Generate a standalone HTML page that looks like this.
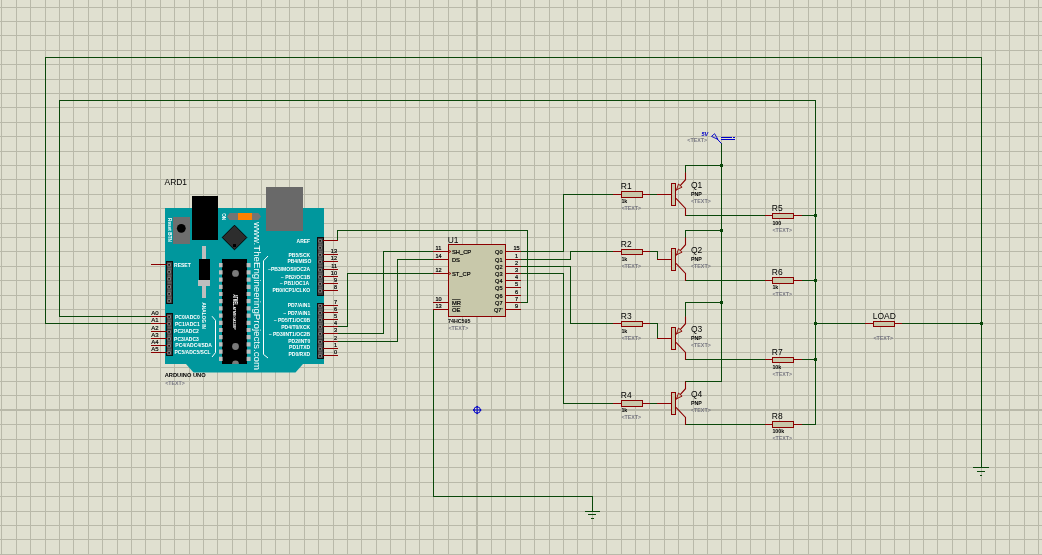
<!DOCTYPE html>
<html lang="en"><head><meta charset="utf-8"><title>Proteus schematic - Arduino UNO, 74HC595, PNP load switch</title>
<style>
html,body{margin:0;padding:0;background:#E0E0D0;}
body{width:1042px;height:555px;overflow:hidden;}
svg{display:block;will-change:transform;font-family:"Liberation Sans",Arial,sans-serif;}
.g{stroke:#B9B9A9;stroke-width:1;fill:none;shape-rendering:crispEdges;}
.g2{stroke:#B9B9A9;stroke-width:2;fill:none;shape-rendering:crispEdges;}
.w{stroke:#0A470A;stroke-width:1;fill:none;shape-rendering:crispEdges;stroke-linecap:square;}
.r{stroke:#8B0000;stroke-width:1;fill:none;shape-rendering:crispEdges;stroke-linecap:square;}
.rd{stroke:#8B0000;stroke-width:1.1;fill:none;}
.c{stroke:#8B0000;stroke-width:1;fill:#C8C8AA;shape-rendering:crispEdges;}
.ca{stroke:#8B0000;stroke-width:.9;fill:#C8C8AA;}
.cl{stroke:#8B0000;stroke-width:.8;fill:none;}
.bk{stroke:#000;stroke-width:.6;fill:none;}
.j{fill:#0A470A;}
.l{font-size:9.1px;fill:#000;}
.s{font-size:5.6px;fill:#000;stroke:#000;stroke-width:.2px;}
.s6{font-size:6px;fill:#000;stroke:#000;stroke-width:.15px;}
.sb{font-size:5.3px;fill:#000;font-weight:bold;}
.t{font-size:5.3px;fill:#787882;font-weight:bold;}
.bl{font-size:5.5px;fill:#0000C8;font-style:italic;font-weight:bold;}
.wb{font-size:5px;fill:#fff;font-weight:bold;}
.wb4{font-size:4px;fill:#fff;font-weight:bold;}
.ww{font-size:9.4px;fill:#fff;}
</style></head>
<body>
<svg width="1042" height="555" viewBox="0 0 1042 555">
<rect width="1042" height="555" fill="#E0E0D0"/>
<path class="g" d="M1.5 0v555M16.5 0v555M30.5 0v555M45.5 0v555M59.5 0v555M73.5 0v555M88.5 0v555M102.5 0v555M117.5 0v555M131.5 0v555M145.5 0v555M160.5 0v555M174.5 0v555M189.5 0v555M203.5 0v555M217.5 0v555M232.5 0v555M246.5 0v555M261.5 0v555M275.5 0v555M289.5 0v555M304.5 0v555M318.5 0v555M333.5 0v555M347.5 0v555M361.5 0v555M376.5 0v555M390.5 0v555M405.5 0v555M419.5 0v555M433.5 0v555M448.5 0v555M462.5 0v555M491.5 0v555M505.5 0v555M520.5 0v555M534.5 0v555M549.5 0v555M563.5 0v555M577.5 0v555M592.5 0v555M606.5 0v555M621.5 0v555M635.5 0v555M649.5 0v555M664.5 0v555M678.5 0v555M693.5 0v555M707.5 0v555M721.5 0v555M736.5 0v555M750.5 0v555M765.5 0v555M779.5 0v555M793.5 0v555M808.5 0v555M822.5 0v555M837.5 0v555M851.5 0v555M865.5 0v555M880.5 0v555M894.5 0v555M909.5 0v555M923.5 0v555M937.5 0v555M952.5 0v555M966.5 0v555M981.5 0v555M995.5 0v555M1009.5 0v555M1024.5 0v555M1038.5 0v555M0 7.5h1042M0 21.5h1042M0 35.5h1042M0 50.5h1042M0 64.5h1042M0 79.5h1042M0 93.5h1042M0 107.5h1042M0 122.5h1042M0 136.5h1042M0 151.5h1042M0 165.5h1042M0 179.5h1042M0 194.5h1042M0 208.5h1042M0 223.5h1042M0 237.5h1042M0 251.5h1042M0 266.5h1042M0 280.5h1042M0 295.5h1042M0 309.5h1042M0 323.5h1042M0 338.5h1042M0 352.5h1042M0 367.5h1042M0 381.5h1042M0 395.5h1042M0 424.5h1042M0 439.5h1042M0 453.5h1042M0 467.5h1042M0 482.5h1042M0 496.5h1042M0 511.5h1042M0 525.5h1042M0 539.5h1042M0 554.5h1042"/>
<path class="g2" d="M477 0v555M0 410h1042"/>
<path class="w" d="M151.5 323.5 L45.5 323.5 L45.5 57.5 L981.5 57.5 L981.5 467.5M151.5 316.5 L59.5 316.5 L59.5 100.5 L815.5 100.5 L815.5 424.5 L802.5 424.5M802.5 215.5 L815.5 215.5M802.5 280.5 L815.5 280.5M802.5 359.5 L815.5 359.5M815.5 323.5 L865.5 323.5M902.5 323.5 L981.5 323.5M337.5 240.5 L337.5 230.5 L527.5 230.5 L527.5 302.5 L521.5 302.5M338.5 326.5 L347.5 326.5 L347.5 273.5 L433.5 273.5M338.5 333.5 L383.5 333.5 L383.5 251.5 L433.5 251.5M338.5 341.5 L397.5 341.5 L397.5 259.5 L433.5 259.5M433.5 309.5 L433.5 496.5 L592.5 496.5 L592.5 511.5M521.5 251.5 L563.5 251.5 L563.5 194.5 L613.5 194.5M521.5 259.5 L570.5 259.5 L570.5 251.5 L613.5 251.5M521.5 266.5 L570.5 266.5 L570.5 323.5 L613.5 323.5M521.5 273.5 L563.5 273.5 L563.5 403.5 L613.5 403.5M650.5 194.5 L657.5 194.5M650.5 251.5 L657.5 251.5 L657.5 259.5M650.5 323.5 L657.5 323.5 L657.5 338.5M650.5 403.5 L657.5 403.5M721.5 143.5 L721.5 381.5M685.5 172.5 L685.5 165.5 L721.5 165.5M685.5 215.5 L765.5 215.5M685.5 237.5 L685.5 230.5 L721.5 230.5M685.5 280.5 L765.5 280.5M685.5 316.5 L685.5 302.5 L721.5 302.5M685.5 359.5 L765.5 359.5M685.5 381.5 L685.5 381.5 L721.5 381.5M685.5 424.5 L765.5 424.5"/>
<path class="g" style="stroke:#0A470A" d="M973 467.5h16M977 471.5h8M980 475.5h2M585 511.5h15M588 514.5h8M591 518.5h3"/>
<rect class="c" x="621.5" y="191.5" width="21" height="6"/>
<rect class="c" x="621.5" y="249.5" width="21" height="5"/>
<rect class="c" x="621.5" y="321.5" width="21" height="5"/>
<rect class="c" x="621.5" y="400.5" width="21" height="6"/>
<rect class="c" x="772.5" y="213.5" width="21" height="5"/>
<rect class="c" x="772.5" y="277.5" width="21" height="6"/>
<rect class="c" x="772.5" y="357.5" width="21" height="5"/>
<rect class="c" x="772.5" y="421.5" width="21" height="6"/>
<rect class="c" x="873.5" y="321.5" width="21" height="5"/>
<rect class="c" x="671.5" y="183.5" width="4" height="22"/>
<rect class="c" x="671.5" y="248.5" width="4" height="22"/>
<rect class="c" x="671.5" y="327.5" width="4" height="22"/>
<rect class="c" x="671.5" y="392.5" width="4" height="22"/>
<g fill="none" stroke="#0000C8" stroke-width="1"><path d="M721.5 143.6 L716.6 138.4"/><path d="M711.5 136.4 L714.6 133.7 L717.9 139.4 Z" stroke-width=".9"/><path d="M721 137.5 H732 M733 137.5 H735 M721 139.5 H735" stroke-width="1" shape-rendering="crispEdges"/></g>
<g fill="none" stroke="#0000C8" stroke-width=".95"><circle cx="477.15" cy="410" r="3.2"/><path d="M473 410 H481.3 M477.15 405.9 V414.1"/></g><path fill="#0000C8" d="M472.8 410 l1.5 -1.2 v2.4z M481.5 410 l-1.5 -1.2 v2.4z M477.15 405.7 l-1.2 1.5 h2.4z M477.15 414.3 l-1.2 -1.5 h2.4z"/>
<rect class="c" x="448.5" y="244.5" width="57" height="72"/>
<path class="cl" d="M448.5 250.2 l2.4 1.3 l-2.4 1.3"/>
<path class="cl" d="M448.5 272.2 l2.4 1.3 l-2.4 1.3"/>
<path class="bk" d="M452 299.5 h8.6"/>
<path class="bk" d="M452 306.5 h8.6"/>
<path fill="#00979D" d="M165 208 H324 V364 H303 L295.5 372.5 H193.5 L186 364 H165 Z"/>
<rect fill="#000" x="192" y="196" width="26" height="44"/>
<rect fill="#696969" x="266" y="187" width="37" height="44"/>
<rect fill="#6E6E6E" x="173" y="217" width="17" height="27"/>
<circle fill="#000" cx="181.3" cy="228.3" r="4.4"/>
<path fill="#747474" d="M227 216.5 L229.6 213 H258.4 L261 216.5 L258.4 220 H229.6 Z"/>
<rect fill="#FF8000" x="238" y="213" width="14" height="7"/>
<path fill="#2D2D2D" stroke="#000" stroke-width="1" d="M234.5 225.2 L246.8 237.5 L234.5 249.8 L222.2 237.5 Z"/>
<rect fill="#000" x="233" y="244" width="3" height="3"/>
<rect fill="#BEBEBE" x="202" y="246" width="4" height="52"/>
<rect fill="#000" x="199" y="259" width="11" height="21"/>
<rect fill="#BEBEBE" x="198" y="280" width="12" height="6"/>
<rect fill="#000" x="222" y="259" width="25" height="105"/>
<path fill="#BEBEBE" d="M219 263.1h3.6v4.2h-3.6z M246.6 263.1h4v4.2h-4zM219 270.3h3.6v4.2h-3.6z M246.6 270.3h4v4.2h-4zM219 277.5h3.6v4.2h-3.6z M246.6 277.5h4v4.2h-4zM219 284.7h3.6v4.2h-3.6z M246.6 284.7h4v4.2h-4zM219 291.9h3.6v4.2h-3.6z M246.6 291.9h4v4.2h-4zM219 299.1h3.6v4.2h-3.6z M246.6 299.1h4v4.2h-4zM219 306.3h3.6v4.2h-3.6z M246.6 306.3h4v4.2h-4zM219 313.5h3.6v4.2h-3.6z M246.6 313.5h4v4.2h-4zM219 320.7h3.6v4.2h-3.6z M246.6 320.7h4v4.2h-4zM219 327.9h3.6v4.2h-3.6z M246.6 327.9h4v4.2h-4zM219 335.1h3.6v4.2h-3.6z M246.6 335.1h4v4.2h-4zM219 342.3h3.6v4.2h-3.6z M246.6 342.3h4v4.2h-4zM219 349.5h3.6v4.2h-3.6z M246.6 349.5h4v4.2h-4zM219 356.7h3.6v4.2h-3.6z M246.6 356.7h4v4.2h-4z"/>
<circle fill="#7A7A7A" cx="235.5" cy="273.4" r="3.4"/>
<circle fill="#7A7A7A" cx="235.5" cy="346.5" r="3.4"/>
<path fill="#7A7A7A" d="M232.1 364 A3.4 3.4 0 0 1 238.9 364 Z"/>
<path fill="none" stroke="#fff" stroke-width="1" d="M268 256 L263.5 260.8 V354.4 L268 358"/>
<path fill="none" stroke="#fff" stroke-width="1" d="M212 316.2 L215.5 320.4 V352.6 L212 357"/>
<rect fill="#0C0C0C" x="317" y="237" width="7" height="59"/>
<rect fill="#3A3A3A" x="318" y="238" width="5" height="57"/>
<path fill="#606060" d="M318.5 243.4h4v2.4h-4zM318.5 250.4h4v2.4h-4zM318.5 257.4h4v2.4h-4zM318.5 264.4h4v2.4h-4zM318.5 272.4h4v2.4h-4zM318.5 279.4h4v2.4h-4zM318.5 286.4h4v2.4h-4z"/>
<path fill="#8A8A8A" d="M318.4 239.2h3.4v3.4h-3.4zM318.4 246.2h3.4v3.4h-3.4zM318.4 253.2h3.4v3.4h-3.4zM318.4 260.2h3.4v3.4h-3.4zM318.4 268.2h3.4v3.4h-3.4zM318.4 275.2h3.4v3.4h-3.4zM318.4 282.2h3.4v3.4h-3.4zM318.4 289.2h3.4v3.4h-3.4z"/>
<path fill="#101010" d="M319.3 240.1h1.6v1.6h-1.6zM319.3 247.1h1.6v1.6h-1.6zM319.3 254.1h1.6v1.6h-1.6zM319.3 261.1h1.6v1.6h-1.6zM319.3 269.1h1.6v1.6h-1.6zM319.3 276.1h1.6v1.6h-1.6zM319.3 283.1h1.6v1.6h-1.6zM319.3 290.1h1.6v1.6h-1.6z"/>
<rect fill="#0C0C0C" x="317" y="303" width="7" height="56"/>
<rect fill="#3A3A3A" x="318" y="304" width="5" height="54"/>
<path fill="#606060" d="M318.5 308.4h4v2.4h-4zM318.5 315.4h4v2.4h-4zM318.5 322.4h4v2.4h-4zM318.5 329.4h4v2.4h-4zM318.5 336.4h4v2.4h-4zM318.5 344.4h4v2.4h-4zM318.5 351.4h4v2.4h-4z"/>
<path fill="#8A8A8A" d="M318.4 304.2h3.4v3.4h-3.4zM318.4 311.2h3.4v3.4h-3.4zM318.4 318.2h3.4v3.4h-3.4zM318.4 325.2h3.4v3.4h-3.4zM318.4 332.2h3.4v3.4h-3.4zM318.4 340.2h3.4v3.4h-3.4zM318.4 347.2h3.4v3.4h-3.4zM318.4 354.2h3.4v3.4h-3.4z"/>
<path fill="#101010" d="M319.3 305.1h1.6v1.6h-1.6zM319.3 312.1h1.6v1.6h-1.6zM319.3 319.1h1.6v1.6h-1.6zM319.3 326.1h1.6v1.6h-1.6zM319.3 333.1h1.6v1.6h-1.6zM319.3 341.1h1.6v1.6h-1.6zM319.3 348.1h1.6v1.6h-1.6zM319.3 355.1h1.6v1.6h-1.6z"/>
<rect fill="#0C0C0C" x="166" y="261" width="7" height="43"/>
<rect fill="#3A3A3A" x="167" y="262" width="5" height="41"/>
<path fill="#606060" d="M167.5 267.4h4v2.4h-4zM167.5 274.4h4v2.4h-4zM167.5 281.4h4v2.4h-4zM167.5 289.4h4v2.4h-4zM167.5 296.4h4v2.4h-4z"/>
<path fill="#8A8A8A" d="M167.4 263.2h3.4v3.4h-3.4zM167.4 270.2h3.4v3.4h-3.4zM167.4 277.2h3.4v3.4h-3.4zM167.4 285.2h3.4v3.4h-3.4zM167.4 292.2h3.4v3.4h-3.4zM167.4 299.2h3.4v3.4h-3.4z"/>
<path fill="#101010" d="M168.3 264.1h1.6v1.6h-1.6zM168.3 271.1h1.6v1.6h-1.6zM168.3 278.1h1.6v1.6h-1.6zM168.3 286.1h1.6v1.6h-1.6zM168.3 293.1h1.6v1.6h-1.6zM168.3 300.1h1.6v1.6h-1.6z"/>
<rect fill="#0C0C0C" x="166" y="313" width="7" height="43"/>
<rect fill="#3A3A3A" x="167" y="314" width="5" height="41"/>
<path fill="#606060" d="M167.5 319.4h4v2.4h-4zM167.5 326.4h4v2.4h-4zM167.5 334.4h4v2.4h-4zM167.5 341.4h4v2.4h-4zM167.5 348.4h4v2.4h-4z"/>
<path fill="#8A8A8A" d="M167.4 315.2h3.4v3.4h-3.4zM167.4 322.2h3.4v3.4h-3.4zM167.4 330.2h3.4v3.4h-3.4zM167.4 337.2h3.4v3.4h-3.4zM167.4 344.2h3.4v3.4h-3.4zM167.4 351.2h3.4v3.4h-3.4z"/>
<path fill="#101010" d="M168.3 316.1h1.6v1.6h-1.6zM168.3 323.1h1.6v1.6h-1.6zM168.3 331.1h1.6v1.6h-1.6zM168.3 338.1h1.6v1.6h-1.6zM168.3 345.1h1.6v1.6h-1.6zM168.3 352.1h1.6v1.6h-1.6z"/>
<path class="r" d="M613.5 194.5 L620.5 194.5M643.5 194.5 L649.5 194.5M613.5 251.5 L620.5 251.5M643.5 251.5 L649.5 251.5M613.5 323.5 L620.5 323.5M643.5 323.5 L649.5 323.5M613.5 403.5 L620.5 403.5M643.5 403.5 L649.5 403.5M765.5 215.5 L771.5 215.5M794.5 215.5 L801.5 215.5M765.5 280.5 L771.5 280.5M794.5 280.5 L801.5 280.5M765.5 359.5 L771.5 359.5M794.5 359.5 L801.5 359.5M765.5 424.5 L771.5 424.5M794.5 424.5 L801.5 424.5M865.5 323.5 L872.5 323.5M895.5 323.5 L901.5 323.5M657.5 194.5 L671.5 194.5M657.5 259.5 L671.5 259.5M657.5 338.5 L671.5 338.5M657.5 403.5 L671.5 403.5M433.5 251.5 L448.5 251.5M433.5 259.5 L448.5 259.5M433.5 273.5 L448.5 273.5M433.5 302.5 L448.5 302.5M433.5 309.5 L448.5 309.5M505.5 251.5 L520.5 251.5M505.5 259.5 L520.5 259.5M505.5 266.5 L520.5 266.5M505.5 273.5 L520.5 273.5M505.5 280.5 L520.5 280.5M505.5 287.5 L520.5 287.5M505.5 295.5 L520.5 295.5M505.5 302.5 L520.5 302.5M505.5 309.5 L520.5 309.5M323.5 240.5 L337.5 240.5M323.5 254.5 L337.5 254.5M323.5 261.5 L337.5 261.5M323.5 269.5 L337.5 269.5M323.5 276.5 L337.5 276.5M323.5 283.5 L337.5 283.5M323.5 290.5 L337.5 290.5M323.5 305.5 L337.5 305.5M323.5 312.5 L337.5 312.5M323.5 319.5 L337.5 319.5M323.5 326.5 L337.5 326.5M323.5 333.5 L337.5 333.5M323.5 341.5 L337.5 341.5M323.5 348.5 L337.5 348.5M323.5 355.5 L337.5 355.5M151.5 264.5 L166.5 264.5M151.5 316.5 L166.5 316.5M151.5 323.5 L166.5 323.5M151.5 331.5 L166.5 331.5M151.5 338.5 L166.5 338.5M151.5 345.5 L166.5 345.5M151.5 352.5 L166.5 352.5"/>
<path class="rd" d="M676 190.3 L685.5 179.7 V172.5M676 198.3 L685.5 208.5 V216M676 255.3 L685.5 244.7 V237.5M676 263.3 L685.5 273.5 V281M676 334.3 L685.5 323.7 V316.5M676 342.3 L685.5 352.5 V360M676 399.3 L685.5 388.7 V381.5M676 407.3 L685.5 417.5 V425"/>
<path class="ca" d="M676.6 189.7 L678.5 184 L682.1 187.2 Z"/>
<path class="ca" d="M676.6 254.7 L678.5 249 L682.1 252.2 Z"/>
<path class="ca" d="M676.6 333.7 L678.5 328 L682.1 331.2 Z"/>
<path class="ca" d="M676.6 398.7 L678.5 393 L682.1 396.2 Z"/>
<path class="j" d="M814 214h3v3h-3zM814 279h3v3h-3zM814 358h3v3h-3zM814 322h3v3h-3zM980 322h3v3h-3zM720 164h3v3h-3zM720 229h3v3h-3zM720 301h3v3h-3z"/>
<g>
<text class="l" transform="translate(620.8 188.9) scale(.93 1)">R1</text>
<text class="sb" x="621.4" y="203">1k</text>
<text class="t" x="621.4" y="210">&lt;TEXT&gt;</text>
<text class="l" transform="translate(620.8 246.5) scale(.93 1)">R2</text>
<text class="sb" x="621.4" y="260.6">1k</text>
<text class="t" x="621.4" y="267.6">&lt;TEXT&gt;</text>
<text class="l" transform="translate(620.8 318.5) scale(.93 1)">R3</text>
<text class="sb" x="621.4" y="332.6">1k</text>
<text class="t" x="621.4" y="339.6">&lt;TEXT&gt;</text>
<text class="l" transform="translate(620.8 397.7) scale(.93 1)">R4</text>
<text class="sb" x="621.4" y="411.8">1k</text>
<text class="t" x="621.4" y="418.8">&lt;TEXT&gt;</text>
<text class="l" transform="translate(771.8 210.5) scale(.93 1)">R5</text>
<text class="sb" x="772.4" y="224.6">100</text>
<text class="t" x="772.4" y="231.6">&lt;TEXT&gt;</text>
<text class="l" transform="translate(771.8 275.3) scale(.93 1)">R6</text>
<text class="sb" x="772.4" y="289.4">1k</text>
<text class="t" x="772.4" y="296.4">&lt;TEXT&gt;</text>
<text class="l" transform="translate(771.8 354.5) scale(.93 1)">R7</text>
<text class="sb" x="772.4" y="368.6">10k</text>
<text class="t" x="772.4" y="375.6">&lt;TEXT&gt;</text>
<text class="l" transform="translate(771.8 419.3) scale(.93 1)">R8</text>
<text class="sb" x="772.4" y="433.4">100k</text>
<text class="t" x="772.4" y="440.4">&lt;TEXT&gt;</text>
<text class="l" transform="translate(872.8 318.5) scale(.93 1)">LOAD</text>
<text class="t" x="873.4" y="339.6">&lt;TEXT&gt;</text>
<text class="l" transform="translate(691 188.2) scale(.93 1)">Q1</text>
<text class="sb" x="691" y="195.7">PNP</text>
<text class="t" x="691" y="202.9">&lt;TEXT&gt;</text>
<text class="l" transform="translate(691 253.2) scale(.93 1)">Q2</text>
<text class="sb" x="691" y="260.7">PNP</text>
<text class="t" x="691" y="267.9">&lt;TEXT&gt;</text>
<text class="l" transform="translate(691 332.2) scale(.93 1)">Q3</text>
<text class="sb" x="691" y="339.7">PNP</text>
<text class="t" x="691" y="346.9">&lt;TEXT&gt;</text>
<text class="l" transform="translate(691 397.2) scale(.93 1)">Q4</text>
<text class="sb" x="691" y="404.7">PNP</text>
<text class="t" x="691" y="411.9">&lt;TEXT&gt;</text>
<text class="bl" x="701.5" y="135.6">5V</text>
<text class="t" x="687.3" y="141.9">&lt;TEXT&gt;</text>
<text class="l" transform="translate(447.7 242.9) scale(.93 1)">U1</text>
<text class="sb" x="448" y="323">74HC595</text>
<text class="t" x="448.5" y="329.7">&lt;TEXT&gt;</text>
<text class="s" x="435.5" y="249.8">11</text>
<text class="s" x="451.9" y="253.6" style="font-size:5.8px">SH_CP</text>
<text class="s" x="435.5" y="257.8">14</text>
<text class="s" x="451.9" y="261.6" style="font-size:5.8px">DS</text>
<text class="s" x="435.5" y="271.8">12</text>
<text class="s" x="451.9" y="275.6" style="font-size:5.8px">ST_CP</text>
<text class="s" x="435.5" y="300.8">10</text>
<text class="s" x="451.9" y="304.6" style="font-size:5.8px">MR</text>
<text class="s" x="435.5" y="307.8">13</text>
<text class="s" x="451.9" y="311.6" style="font-size:5.8px">OE</text>
<text class="s" x="513.5" y="249.8">15</text>
<text class="s" x="502.5" y="253.6" text-anchor="end">Q0</text>
<text class="s" x="515" y="257.8">1</text>
<text class="s" x="502.5" y="261.6" text-anchor="end">Q1</text>
<text class="s" x="515" y="264.8">2</text>
<text class="s" x="502.5" y="268.6" text-anchor="end">Q2</text>
<text class="s" x="515" y="271.8">3</text>
<text class="s" x="502.5" y="275.6" text-anchor="end">Q3</text>
<text class="s" x="515" y="278.8">4</text>
<text class="s" x="502.5" y="282.6" text-anchor="end">Q4</text>
<text class="s" x="515" y="285.8">5</text>
<text class="s" x="502.5" y="289.6" text-anchor="end">Q5</text>
<text class="s" x="515" y="293.8">6</text>
<text class="s" x="502.5" y="297.6" text-anchor="end">Q6</text>
<text class="s" x="515" y="300.8">7</text>
<text class="s" x="502.5" y="304.6" text-anchor="end">Q7</text>
<text class="s" x="515" y="307.8">9</text>
<text class="s" x="502.5" y="311.6" text-anchor="end">Q7'</text>
<text class="l" transform="translate(164.5 184.9) scale(.93 1)">ARD1</text>
<text class="sb" x="164.7" y="376.9" style="font-size:5.5px" textLength="41" lengthAdjust="spacingAndGlyphs">ARDUINO UNO</text>
<text class="t" x="165.2" y="384.7">&lt;TEXT&gt;</text>
<text class="wb" x="310.2" y="243" text-anchor="end">AREF</text>
<text class="s" x="337" y="252.9" text-anchor="end">13</text>
<text class="wb" x="310.2" y="256.8" text-anchor="end">PB5/SCK</text>
<text class="s" x="337" y="259.9" text-anchor="end">12</text>
<text class="wb" x="311.3" y="262.9" text-anchor="end">PB4/MISO</text>
<text class="s" x="337" y="267.9" text-anchor="end">11</text>
<text class="wb" x="310.2" y="271.1" text-anchor="end">~PB3/MOSI/OC2A</text>
<text class="s" x="337" y="274.9" text-anchor="end">10</text>
<text class="wb" x="310.2" y="278.8" text-anchor="end">~ PB2/OC1B</text>
<text class="s" x="337" y="281.9" text-anchor="end">9</text>
<text class="wb" x="309.1" y="284.9" text-anchor="end">~ PB1/OC1A</text>
<text class="s" x="337" y="288.9" text-anchor="end">8</text>
<text class="wb" x="310.2" y="291.8" text-anchor="end">PB0/ICP1/CLKO</text>
<text class="s" x="337" y="303.9" text-anchor="end">7</text>
<text class="wb" x="310.2" y="307" text-anchor="end">PD7/AIN1</text>
<text class="s" x="337" y="310.9" text-anchor="end">6</text>
<text class="wb" x="310.2" y="314.7" text-anchor="end">~ PD7/AIN1</text>
<text class="s" x="337" y="317.9" text-anchor="end">5</text>
<text class="wb" x="310.2" y="322.1" text-anchor="end">~ PD5/T1/OC0B</text>
<text class="s" x="337" y="324.9" text-anchor="end">4</text>
<text class="wb" x="310.2" y="328.8" text-anchor="end">PD4/T0/XCK</text>
<text class="s" x="337" y="331.9" text-anchor="end">3</text>
<text class="wb" x="310.2" y="336" text-anchor="end">~ PD3/INT1/OC2B</text>
<text class="s" x="337" y="339.9" text-anchor="end">2</text>
<text class="wb" x="310.2" y="342.9" text-anchor="end">PD2/INT0</text>
<text class="s" x="337" y="346.9" text-anchor="end">1</text>
<text class="wb" x="310.2" y="349.1" text-anchor="end">PD1/TXD</text>
<text class="s" x="337" y="353.9" text-anchor="end">0</text>
<text class="wb" x="310.2" y="356.1" text-anchor="end">PD0/RXD</text>
<text class="wb" x="174.1" y="266.8">RESET</text>
<text class="s6" x="151.3" y="314.6">A0</text>
<text class="wb" x="175" y="318.8">PC0/ADC0</text>
<text class="s6" x="151.3" y="321.6">A1</text>
<text class="wb" x="175" y="326">PC1/ADC1</text>
<text class="s6" x="151.3" y="329.6">A2</text>
<text class="wb" x="174.1" y="333">PC2/ADC2</text>
<text class="s6" x="151.3" y="336.6">A3</text>
<text class="wb" x="174.1" y="340.8">PC3/ADC3</text>
<text class="s6" x="151.3" y="343.6">A4</text>
<text class="wb" x="175.3" y="347.1">PC4/ADC4/SDA</text>
<text class="s6" x="151.3" y="350.6">A5</text>
<text class="wb" x="174.5" y="354">PC5/ADC5/SCL</text>
<text class="ww" transform="translate(254.3 222) rotate(90)" textLength="148" lengthAdjust="spacingAndGlyphs">www.TheEngineeringProjects.com</text>
<text class="wb4" transform="translate(202.2 302.4) rotate(90)" style="font-size:4.8px" textLength="26.6" lengthAdjust="spacingAndGlyphs">ANALOG IN</text>
<text class="wb4" transform="translate(221.8 213.2) rotate(90)" style="font-size:5.6px" textLength="7" lengthAdjust="spacingAndGlyphs">ON</text>
<text class="wb4" transform="translate(167.8 218) rotate(90)" style="font-size:4.6px" textLength="24" lengthAdjust="spacingAndGlyphs">Reset BTN</text>
<text class="wb4" transform="translate(232.6 294.6) rotate(90)" style="font-size:7px" textLength="11" lengthAdjust="spacingAndGlyphs">ATMEL</text>
<text class="wb4" transform="translate(233.2 306.6) rotate(90)" style="font-size:3.6px" textLength="23" lengthAdjust="spacingAndGlyphs">ATMEGA328P</text>
</g>
</svg>
</body></html>
